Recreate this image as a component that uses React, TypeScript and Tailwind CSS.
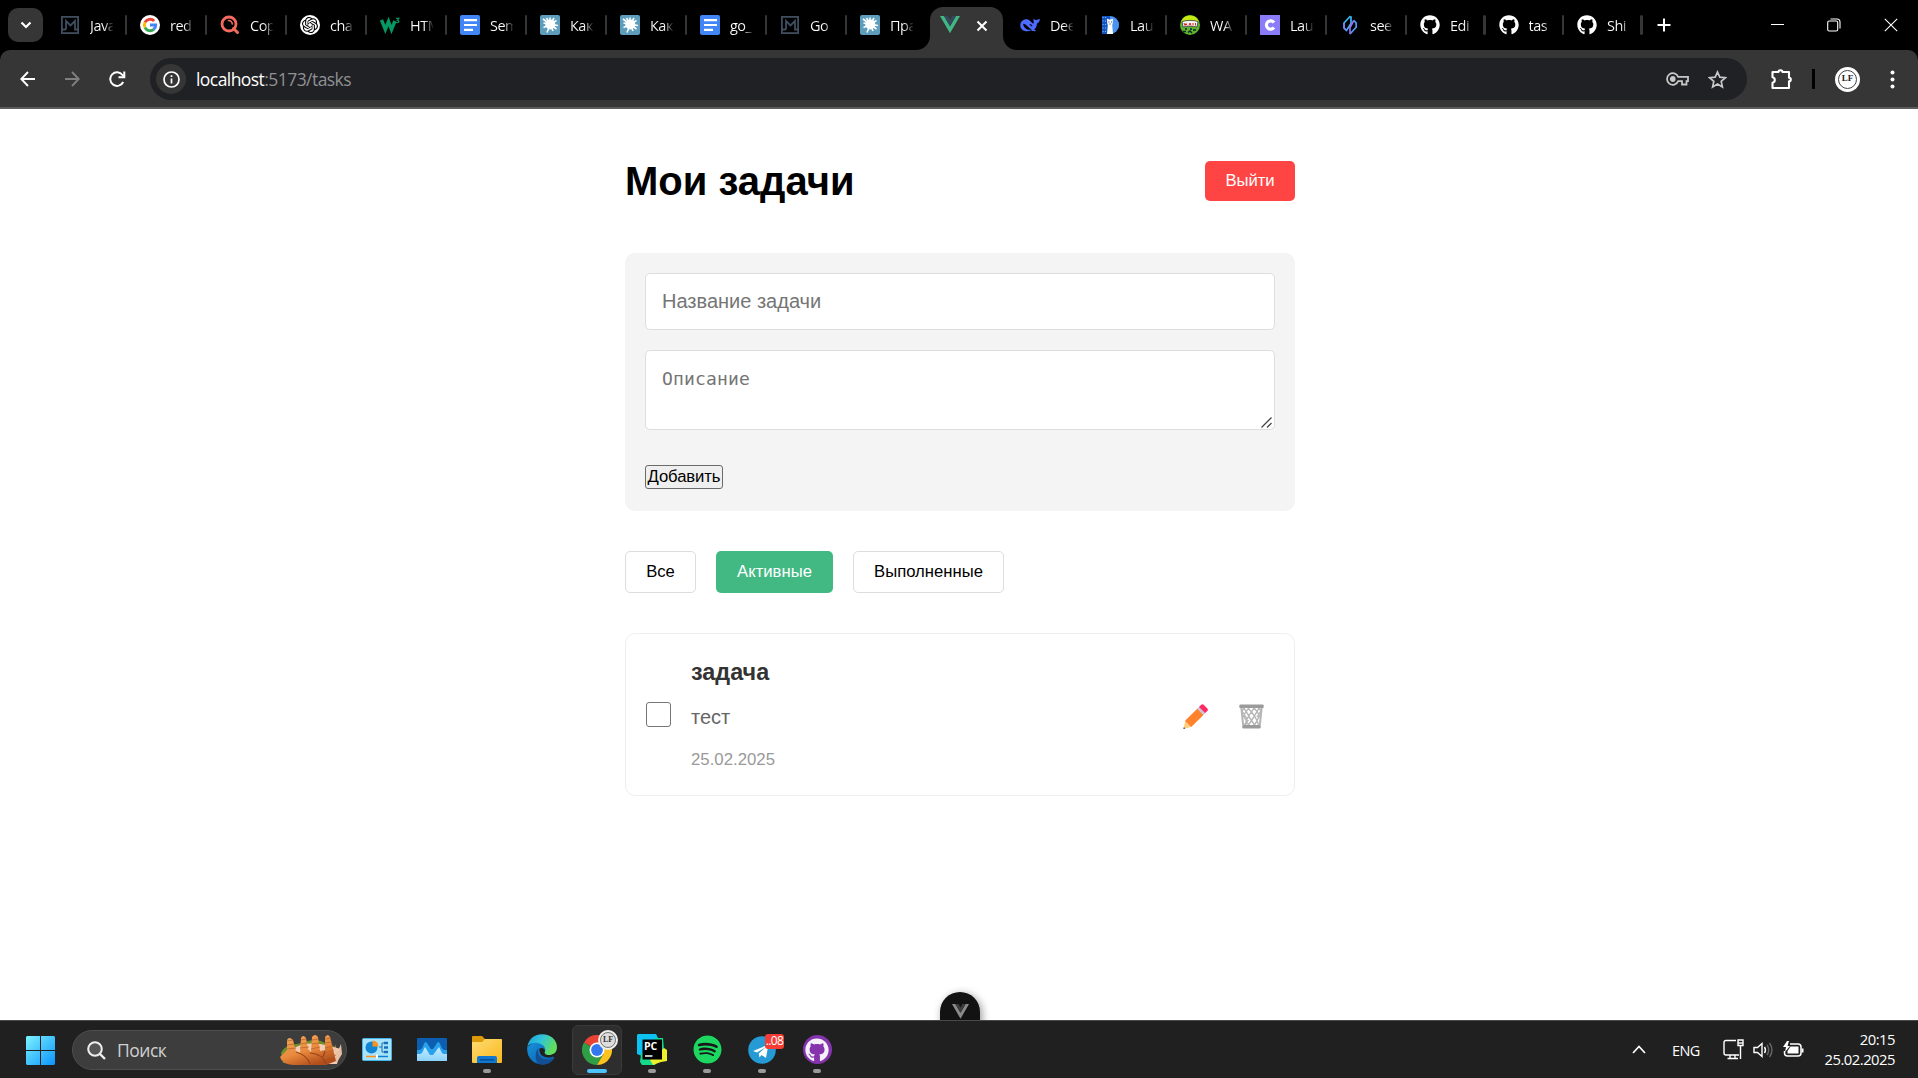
import React from "react";
import { FaGithub, FaSpotify } from "react-icons/fa";
import { SiOpenai } from "react-icons/si";

const M = () => (
  <svg width="18" height="18" viewBox="0 0 18 18" fill="none" stroke="#3f4d5f" strokeWidth="1.8">
    <rect x="0.9" y="0.9" width="16.2" height="16.2" />
    <path d="M5 13.500V5l4.500 4.500L14 5v8.500h3M5 13.500H1" />
  </svg>
);
const Google = () => (
  <svg width="20" height="20" viewBox="0 0 20 20" fill="none" strokeWidth="2.9">
    <circle cx="10" cy="10" r="10" fill="#fff" />
    <path d="M5 7.400A5.700 5.700 0 0 1 14.200 6" stroke="#ea4335" />
    <path d="M5 7.400a5.700 5.700 0 0 0 0 5.200" stroke="#fbbc05" />
    <path d="M5 12.600a5.700 5.700 0 0 0 8.700 1.800" stroke="#34a853" />
    <path d="M10 10h5.700a5.700 5.700 0 0 1-2 4.400" stroke="#4285f4" />
  </svg>
);
const RedSearch = () => (
  <svg width="20" height="20" viewBox="0 0 20 20" fill="none" stroke="#f36b5e" strokeLinecap="round">
    <circle cx="9" cy="9" r="7" strokeWidth="2.8" />
    <path d="M13.500 13.500l4 4" strokeWidth="3" />
    <path d="M8.500 5.500a4 4 0 0 1 3.800 3.500" strokeWidth="1.6" />
  </svg>
);
const Gpt = () => (
  <span className="flex size-5 items-center justify-center rounded-full bg-white text-black">
    <SiOpenai size={16} />
  </span>
);
const W3 = () => (
  <svg width="20" height="20" viewBox="0 0 20 20" fill="none" stroke="#059862">
    <path d="M1.500 5l3.800 9.500L8.500 6.500l3 8L15 6" strokeWidth="3.400" />
    <path d="M16 3.300h2.900l-1.500 2c2.400 0 1.800 3.200-1.300 2" strokeWidth="1.200" />
  </svg>
);
const Docs = () => (
  <svg width="20" height="20" viewBox="0 0 20 20">
    <rect width="20" height="20" rx="2" fill="#4285f4" />
    <path d="M4 5.200h13M4 10h13M4 14.800h9" stroke="#fff" strokeWidth="2.200" />
  </svg>
);
const Splat = () => (
  <svg width="20" height="20" viewBox="0 0 20 20">
    <rect width="20" height="20" rx="2" fill="#5f9dbd" />
    <circle cx="10.300" cy="9.500" r="5" fill="#fff" />
    <path
      d="M10.300 9.500L3 4M10.300 9.500L6.500 3M10.300 9.500L10 2.500M10.300 9.500L14 3M10.300 9.500L16.500 5.500M10.300 9.500L18 10.500M10.300 9.500L16.500 14M10.300 9.500L13 16M10.300 9.500L7 17.500M10.300 9.500L3.500 12.500M10.300 9.500L3.500 8"
      stroke="#fff"
      strokeWidth="1.600"
    />
  </svg>
);
const Vue = ({ w = 20, a = "#41b883", b = "#34495e" }: { w?: number; a?: string; b?: string }) => (
  <svg width={w} height={w * 0.87} viewBox="0 0 196 170">
    <path d="M0 0h39l59 101 59-101h39L98 170z" fill={a} />
    <path d="M39 0h36l23 40 23-40h36L98 101z" fill={b} />
  </svg>
);
const Whale = () => (
  <svg width="20" height="20" viewBox="0 0 20 20">
    <path
      d="M.3 10.500C.3 6.500 3.500 4 7 4.300c1.500.1 1.600.8 3.200 1.800 1.200.9 1.800 2.100 2.900 2.600.8-.4.700-1.500.4-2.600-.2-1 0-2 .3-2.600.7 1 1.300 1.500 2.500 1.500 1.300 0 2.200-1 3.600-.9-.2 2-1 3.800-2.900 4.300-.2 3-1.300 4.900-2.900 6 .8.600 1.600.8 2.200 1.400-2 .9-3.900.2-5.100-.5C6 17.800.3 15.300.3 10.500z"
      fill="#4d6bfe"
    />
    <path d="M3.200 8.800c3.200-.2 5.300 4.500 8.500 5.500-2.700 1.600-8.500-.5-8.500-5.500zM9.300 9c1.700-.3 3 1 3 2.600-.8-.2-2-1.400-3-2.600z" fill="#000" />
  </svg>
);
const Bear = () => (
  <svg width="20" height="20" viewBox="0 0 20 20">
    <path d="M2 1h8a9 9 0 0 1 0 18H2z" fill="#1256c4" />
    <path d="M10 1a9 9 0 0 1 0 18z" fill="#4a94f0" />
    <path d="M7 19l.8-9C6.500 6.500 7 4.500 10 4.500s3.500 2 2.200 5.500l.8 9z" fill="#fff" />
    <circle cx="7.800" cy="4.800" r="1" fill="#fff" />
    <circle cx="12.200" cy="4.800" r="1" fill="#fff" />
    <path d="M8.500 7h.8M11 7h.8M9.500 9h1" stroke="#123" />
    <path d="M3 2v16M5.500 2v16" stroke="#8ab8f5" strokeDasharray="1 2.500" />
  </svg>
);
const Wasp = () => (
  <svg width="20" height="20" viewBox="0 0 20 20">
    <circle cx="10" cy="10" r="10" fill="#5cb52a" />
    <path d="M1 7a9.500 9.500 0 0 1 18 0z" fill="#c6ea12" />
    <path d="M2 6.500c5-1.500 11-1.500 16 0l-1 5.500c-5-1-9-1-14 0z" fill="#f4f4f4" stroke="#223" strokeWidth=".7" />
    <path d="M4 8l1 2.500 1-2 1 2M9 10.500L10 8l1 2.500M13 8v2.500M15.500 8v2.500" stroke="#d22" fill="none" />
    <path d="M5 14h2M10 14h2M3 16.500h3M13 15h3M8 17.500l2-1.500 2 2" stroke="#123" strokeWidth="1.500" fill="none" />
  </svg>
);
const CIcon = () => (
  <svg width="20" height="20" viewBox="0 0 20 20">
    <path d="M0 0h20v20H0z" fill="#8a7cf8" />
    <path d="M14 7.500A4.200 4.200 0 1 0 14 12.500" fill="none" stroke="#fff" strokeWidth="3.200" />
  </svg>
);
const Diamond = () => (
  <svg width="20" height="20" viewBox="0 0 20 20" fill="none" strokeWidth="1.700">
    <path d="M10.500 1L4 8v5l2.500 2.500L11 8.500V1.200" stroke="#38b6f5" />
    <path d="M10 19l6.200-6.800V8L13.700 5.300" stroke="#4f9cf9" />
    <path d="M10 19v-6.500l3.700-7" stroke="#9a6bf2" />
    <path d="M4 8v5l2.500 2.500" stroke="#7d7cf5" />
  </svg>
);
const Git = () => <FaGithub size={20} color="#fff" />;

type TabT = { i: React.ComponentType; t: string; last?: boolean };
const left: TabT[] = [
  { i: M, t: "Java" }, { i: Google, t: "red" }, { i: RedSearch, t: "Cop" }, { i: Gpt, t: "cha" },
  { i: W3, t: "HTM" }, { i: Docs, t: "Sem" }, { i: Splat, t: "Как" }, { i: Splat, t: "Как" },
  { i: Docs, t: "go_" }, { i: M, t: "Go" }, { i: Splat, t: "Пра", last: true },
];
const right: TabT[] = [
  { i: Whale, t: "Dee" }, { i: Bear, t: "Lau" }, { i: Wasp, t: "WA" }, { i: CIcon, t: "Lau" }, { i: Diamond, t: "see" },
];
const gits: TabT[] = [{ i: Git, t: "Edi" }, { i: Git, t: "tas" }, { i: Git, t: "Shi" }];

const Tab = ({ tab, narrow }: { tab: TabT; narrow?: boolean }) => (
  <div className={`flex h-full shrink-0 items-center pl-3 ${narrow ? "w-[78.5px]" : "w-20"}`}>
    <span className="flex w-5 shrink-0 items-center justify-center"><tab.i /></span>
    <span className="ml-2.5 mt-0.5 w-[23px] overflow-hidden whitespace-nowrap bg-linear-to-r from-white from-60% to-white/10 bg-clip-text text-[14.5px] tracking-[-0.5px] text-transparent">
      {tab.t}
    </span>
    {!tab.last && <span className="ml-auto mr-px h-5 w-[2.5px] shrink-0 rounded-sm bg-[#363636]" />}
  </div>
);

const TabBar = () => (
  <div className="flex h-[50px] items-center bg-black text-white">
    <div className="ml-2 mr-[5px] flex h-[34px] w-[35px] shrink-0 items-center justify-center rounded-[10px] bg-[#363636]">
      <svg width="12" height="8" viewBox="0 0 12 8" fill="none" stroke="#fff" strokeWidth="2.200"><path d="M1.500 1.500L6 6l4.500-4.500" /></svg>
    </div>
    {left.map((t, k) => <Tab key={k} tab={t} />)}
    <div className="relative ml-[2px] mr-[5px] flex h-[43px] w-[73px] shrink-0 items-center self-end rounded-t-[13px] bg-[#363636] pb-[1px] pl-[10px]">
      <svg className="absolute -left-[14px] bottom-0" width="14" height="14"><path d="M14 0v14H0A14 14 0 0 0 14 0" fill="#363636" /></svg>
      <svg className="absolute -right-[14px] bottom-0" width="14" height="14"><path d="M0 0v14h14A14 14 0 0 1 0 0" fill="#363636" /></svg>
      <span className="-mt-1.5"><Vue /></span>
      <svg className="-mt-1 ml-4" width="12" height="12" viewBox="0 0 12 12" stroke="#fff" strokeWidth="2"><path d="M1.500 1.500l9 9M10.500 1.500l-9 9" /></svg>
    </div>
    {right.map((t, k) => <Tab key={k} tab={t} />)}
    {gits.map((t, k) => <Tab key={k} tab={t} narrow />)}
    <svg className="ml-[13px] shrink-0" width="14" height="14" viewBox="0 0 14 14" stroke="#fff" strokeWidth="2"><path d="M7 0.500v13M0.500 7h13" /></svg>
    <div className="ml-auto mr-5 flex items-center gap-[43px]">
      <svg width="13" height="14" viewBox="0 0 13 14" stroke="#fff"><path d="M0 6.500h13" /></svg>
      <svg width="14" height="14" viewBox="0 0 14 14" fill="none" stroke="#fff" strokeWidth="1.100"><rect x=".7" y="3" width="10" height="10" rx="1.500" /><path d="M3.500 1h6.500a3 3 0 0 1 3 3v6.500" /></svg>
      <svg width="14" height="14" viewBox="0 0 14 14" stroke="#fff" strokeWidth="1.100"><path d="M.8.800l12.400 12.400M13.200.800L.8 13.200" /></svg>
    </div>
  </div>
);

const Toolbar = () => (
  <div className="bg-black">
    <div className="flex h-[59px] items-center rounded-t-[10px] border-b-2 border-[#5c5c5c] bg-[#363636] pl-5 pt-px">
      <svg width="16" height="16" viewBox="0 0 16 16" fill="none" stroke="#fff" strokeWidth="1.900"><path d="M15 8H1.500M8 1L1.300 8 8 15" /></svg>
      <svg className="ml-[28px]" width="16" height="16" viewBox="0 0 16 16" fill="none" stroke="#7f7f7f" strokeWidth="1.900"><path d="M1 8h13.500M8 1l6.700 7L8 15" /></svg>
      <svg className="ml-[29px]" width="17" height="16" viewBox="0 0 17 16" fill="none" stroke="#fff" strokeWidth="2"><path d="M14.200 11A6.800 6.800 0 1 1 13.500 4L15 5.500" /><path d="M15.300.500v5.700H9.500" /></svg>
      <div className="ml-6 flex h-[42px] w-[1597px] items-center rounded-full bg-[#202124] pl-1.5">
        <span className="flex size-[30px] items-center justify-center rounded-full bg-[#363636]">
          <svg width="17" height="17" viewBox="0 0 17 17" fill="none" stroke="#fff" strokeWidth="1.700"><circle cx="8.500" cy="8.500" r="7.500" /><path d="M8.500 7.500v5M8.500 4.300v1.800" /></svg>
        </span>
        <span className="ml-2.5 text-[17.5px] tracking-[-0.56px] text-[#8f9093]"><span className="text-white">localhost</span>:5173/tasks</span>
        <svg className="ml-auto" width="23" height="14" viewBox="0 0 23 14" fill="none" stroke="#c7c7c7" strokeWidth="1.800"><path d="M12.200 4.800A5.800 5.800 0 1 0 12.200 9.200H16V12.500H20.500V9.200H22V4.800z" /><circle cx="6.700" cy="7" r="2" fill="#c7c7c7" /></svg>
        <svg className="ml-[19px] mr-5" width="19" height="19" viewBox="0 0 19 19" fill="none" stroke="#c7c7c7" strokeWidth="1.700"><path d="M9.500 2l2.300 5.200 5.600.5-4.200 3.700 1.200 5.500-4.900-2.900-4.900 2.900 1.200-5.500L1.600 7.700l5.600-.5z" /></svg>
      </div>
      <svg className="ml-6" width="22" height="22" viewBox="0 0 22 22" fill="none" stroke="#fff" strokeWidth="2.100"><path d="M1.500 4H7.500a2 1.800 0 0 1 4 0H18v5.800a1.800 1.800 0 0 1 0 3.600V20H1.500v-5.200a2.800 2.800 0 0 0 0-5.500z" strokeLinejoin="round" /></svg>
      <span className="ml-[19px] h-5 w-[3px] bg-black" />
      <span className="ml-5 flex size-[25px] items-center justify-center rounded-full bg-white">
        <span className="flex size-[19px] items-center justify-center rounded-full border border-[#444] font-['Liberation_Serif'] text-[9px] font-bold text-[#222]">LF</span>
      </span>
      <svg className="ml-[30px]" width="5" height="19" fill="#fff"><circle cx="2.500" cy="2.500" r="2" /><circle cx="2.500" cy="9.500" r="2" /><circle cx="2.500" cy="16.500" r="2" /></svg>
    </div>
  </div>
);

const Pencil = () => (
  <svg width="25" height="25" viewBox="0 0 25 25">
    <path d="M2.300 16.500l6.200 6.200L0.500 25z" fill="#ffce7c" />
    <path d="M.9 22.900l1.500 1.500L.3 25z" fill="#433b6b" />
    <path d="M2.300 16.500L14.500 4.500l6.200 6.200L8.500 22.700c-1-.1-1.500-.5-1.800-1.800-1.200-.2-1.700-.7-1.900-1.900-1.300-.2-2.200-1.100-2.500-2.500z" fill="#ff822d" />
    <path d="M14.200 4.800L16.500 2.500l6.200 6.200L20.400 11z" fill="#cdc4d6" />
    <path d="M16 3L18.200.8c.8-.8 1.800-.8 2.500 0l3.600 3.600c.8.800.8 1.700 0 2.500L22.100 9z" fill="#ff2a63" />
  </svg>
);
const Trash = () => (
  <svg width="25" height="25" viewBox="0 0 25 25" fill="none">
    <path d="M2.300 3.500l1.900 18M22.700 3.500l-1.900 18" stroke="#b4b4b4" strokeWidth="2" />
    <path
      d="M5 4l2 3.500-2.500 4.500L7.500 17l-2 4M5 4l-2 3 6 9.500L6.500 21M10 4L7 7.500 10 12l-3 4.500L9.500 21M9 4l3.500 4L9.500 12l3 4.500L9.500 21M15 4l-2.500 4 3 4-3 4.500L15.500 21M15 4l3 3.500-2.500 4.500 2.500 4.500L15.500 21M20 4l-2 3.500 2.500 4.500-2.500 4.500 1.500 4.500M20 4l2 3-4 6"
      stroke="#b6b6b6"
      strokeWidth="1.400"
    />
    <rect x="0.300" y="0.500" width="24.400" height="3.600" rx="1.200" fill="#9b9b9b" />
    <rect x="3.200" y="21" width="18.600" height="3.600" rx="1.500" fill="#9b9b9b" />
  </svg>
);

const btn = "flex h-[42px] items-center justify-center rounded-[5px] text-[16.667px] leading-none";

const Page = () => (
  <main className="flex h-[911px] flex-col items-center overflow-hidden bg-white pl-[2px] font-['Liberation_Sans',Arial,sans-serif] text-black">
    <div className="flex h-full w-[670px] flex-col">
      <div className="mt-[52px] flex h-10 items-center justify-between">
        <h1 className="text-[40px] font-bold leading-none">Мои задачи</h1>
        <button className="h-10 w-[90px] rounded-[5px] bg-[#ff4444] pb-[2px] text-[16.667px] tracking-[-0.1px] text-white">Выйти</button>
      </div>
      <form className="mt-[52px] flex h-[258px] flex-col items-start rounded-[10px] bg-[#f4f4f4] px-5 pt-5">
        <input className="h-[57px] w-full rounded-[5px] border border-[#ddd] bg-white px-4 text-[20px] placeholder:text-[#757575]" placeholder="Название задачи" />
        <div className="relative mt-5 h-20 w-full shrink-0">
          <textarea className="block h-20 w-full resize-none rounded-[5px] border border-[#ddd] bg-white px-4 pt-[14px] font-['DejaVu_Sans_Mono',monospace] text-[18px] tracking-[0.16px] placeholder:text-[#757575]" placeholder="Описание" />
          <svg className="absolute bottom-[2px] right-[3px]" width="11" height="11" stroke="#444" strokeWidth="1.300"><path d="M.5 10.500l10-10M6 10.500L10.500 6" /></svg>
        </div>
        <button type="button" className="mt-[35px] flex h-6 w-[78px] items-center justify-center whitespace-nowrap rounded-[3px] border border-[#6b6b6b] bg-[#efefef] text-[16.667px] leading-none tracking-[-0.1px]">Добавить</button>
      </form>
      <div className="mt-10 flex gap-5">
        <button className={`${btn} w-[71px] border border-[#ddd]`}>Все</button>
        <button className={`${btn} w-[117px] bg-[#42b983] text-white`}>Активные</button>
        <button className={`${btn} w-[151px] border border-[#ddd]`}>Выполненные</button>
      </div>
      <div className="mt-10 flex h-[163px] items-center rounded-[10px] border border-[#eee] pl-5 pr-[30px]">
        <span className="size-[25px] rounded-[3px] border-[1.5px] border-[#767676] bg-white" />
        <div className="ml-5 flex flex-col">
          <h3 className="text-[23.4px] font-bold leading-[26px] text-[#333]">задача</h3>
          <p className="mt-5 text-[20px] leading-6 text-[#666]">тест</p>
          <span className="mt-[21px] text-[16.8px] leading-5 text-[#999]">25.02.2025</span>
        </div>
        <div className="ml-auto mt-1 flex gap-[31px]"><Pencil /><Trash /></div>
      </div>
      <div className="mt-auto h-7 self-center">
        <div className="flex h-[50px] w-10 justify-center rounded-[20px] bg-[#121212] pt-3 shadow-[2px_2px_8px_rgba(0,0,0,0.4)]"><Vue w={17} a="#8a8a8a" b="#3d3d3d" /></div>
      </div>
    </div>
  </main>
);

const WinLogo = () => (
  <svg width="29" height="29" viewBox="0 0 29 29">
    <defs><linearGradient id="win" gradientUnits="userSpaceOnUse" x1="0" y1="0" x2="29" y2="29"><stop stopColor="#7df3ff" /><stop offset="1" stopColor="#0a93fb" /></linearGradient></defs>
    <path d="M1 0h13v14H0V1zM15 0h13l1 1v13H15zM0 15h14v14H1l-1-1zM15 15h14v13l-1 1H15z" fill="url(#win)" />
  </svg>
);
const Croissants = () => (
  <svg width="64" height="32" viewBox="0 0 64 32">
    <defs><linearGradient id="cr" x2=".6" y2="1"><stop stopColor="#f6ae5e" /><stop offset=".6" stopColor="#e8893c" /><stop offset="1" stopColor="#b04d1c" /></linearGradient></defs>
    <path d="M2 19C6 10 15 11 22 9s14-5 22-1 12 3 17 9l-3 12H4z" fill="#6d8f2c" />
    <path d="M12 16c10-7 20-7 30-6l20 5-4 15H15z" fill="#f0cdb4" />
    <path d="M56 10l2 9 4-9 1 10-6 10z" fill="#e9bfa4" />
    <path d="M1 23l7-7V6q2-4 6 0l3 11 4 2 1-15q2-4 5 0l2 11 3 3 1-15q3-4 6 0l2 14 5-1V3q3-4 5 0l6 24-10 4H14Q3 30 1 23z" fill="url(#cr)" />
    <path d="M8 7l6-1M8 11l7-1M8 15l9-1M22 6l5-1M21 10l7-1M21 14l9-1M33 6l6-1M33 10l7-1M32 15l9-2M46 5l6-1M46 9l7-1M46 14l8-2M46 19l9-3M46 24l11-3" stroke="#b9652a" strokeWidth=".8" />
    <path d="M17 18q11 3 14 12M31 19q13 1 16 11M46 17l-2 6" stroke="#9a4417" fill="none" strokeWidth="1.200" />
  </svg>
);
const ControlPanel = () => (
  <svg width="30" height="24" viewBox="0 0 30 24">
    <rect x=".5" y=".5" width="29" height="22" rx="1" fill="#a9e3fb" stroke="#43b4ec" />
    <circle cx="9.500" cy="9.500" r="6" fill="#1085d4" /><path d="M10.500 8.500V2.500a6 6 0 0 1 6 6z" fill="#f6921e" />
    <path d="M17 9h3M20 5v9M20 5h2M20 14h2" stroke="#1e6fa8" /><path d="M22 5h4M22 9.500h4M22 14h4" stroke="#1470b8" strokeWidth="2.500" />
    <path d="M4 18.500h11" stroke="#f6921e" strokeWidth="1.500" /><path d="M15 18.500h11" stroke="#0b7fd0" strokeWidth="1.500" /><path d="M15 16.500v4" stroke="#fff" strokeWidth="2" />
  </svg>
);
const Monitor = () => (
  <svg width="30" height="24" viewBox="0 0 30 24">
    <defs><linearGradient id="mo" x2="0" y2="1"><stop stopColor="#c4ecff" /><stop offset="1" stopColor="#8ad3fb" /></linearGradient></defs>
    <rect width="30" height="23" rx="1" fill="#0c5fb0" />
    <path d="M0 12h2q3 0 4.500-5Q8 2 10 5l3.500 5.500q1.500 1.500 3 0L20 5q2-3 3.500 2 1.500 5 4.500 5h2v11H0z" fill="#29a0ea" />
    <path d="M0 16h3q2 0 3.500-4L8 9l5 8h3l6-8 3 6q1 1 2 1h3v7H0z" fill="url(#mo)" />
  </svg>
);
const Folder = () => (
  <svg width="30" height="28" viewBox="0 0 30 28">
    <defs><linearGradient id="fo" x2="1" y2="1"><stop stopColor="#ffdc73" /><stop offset="1" stopColor="#f9b81c" /></linearGradient></defs>
    <path d="M0 1q0-1 1-1h9l3 3h15q2 0 2 2v8H0z" fill="#dd9a08" />
    <path d="M0 6h10l3-3h16q1 0 1 1v22q0 1-1 1H1q-1 0-1-1z" fill="url(#fo)" />
    <path d="M5 27v-5q0-2 2-2h16q2 0 2 2v5z" fill="#0f78d0" /><path d="M8 23.800h14" stroke="#0a4d93" strokeWidth="1.500" />
  </svg>
);
const Edge = () => (
  <svg width="30" height="31" viewBox="0 0 30 31">
    <defs>
      <linearGradient id="e1" x2="1" y2=".4"><stop stopColor="#1c9fe0" /><stop offset=".5" stopColor="#31c5d8" /><stop offset="1" stopColor="#62de5a" /></linearGradient>
      <linearGradient id="e2" x2="1" y2="1"><stop stopColor="#1794e0" /><stop offset="1" stopColor="#0c59a4" /></linearGradient>
    </defs>
    <path d="M.3 13C-.8 23 6 30.500 15 30.500c5 0 9-2 12-6.500L18 11 8 7z" fill="url(#e2)" />
    <path d="M.3 13C2 4 8 .3 15 .3c9 0 15 6 15 12.700 0 6-4 8-8.500 8-4 0-5-1.500-3.500-3.500 1-2 0-7-7-8.500C6 8 2 10 .3 13z" fill="url(#e1)" />
    <path d="M11.500 14c-2 7 3 12 10 11.500 3-.2 5-1.500 6.500-2.500-3 6-9 8.500-15 7.300C7 28 8 17 11.500 14z" fill="#124f93" />
    <path d="M12.500 14.500c2-1.500 5.500 0 5.500 2.500-1.500 2.500 1 4 3.500 4 3 0 5-.5 7-1.500-.5 2-3 4-7 4-6 0-10-4-9-9z" fill="#202020" />
  </svg>
);
const Chrome = () => (
  <svg width="30" height="30" viewBox="0 0 30 30">
    <path d="M15 15L2 7.500A15 15 0 0 1 28 7.500z" fill="#ea4335" />
    <path d="M15 15h-1L2 7.500A15 15 0 0 0 15 30l6.500-11z" fill="#2f9e44" />
    <path d="M15 7.500h13A15 15 0 0 1 15 30l6.500-11z" fill="#fcc31e" />
    <circle cx="15" cy="15" r="7.500" fill="#fff" /><circle cx="15" cy="15" r="5.900" fill="#3478f0" />
  </svg>
);
const PyCharm = () => (
  <svg width="30" height="31" viewBox="0 0 30 31">
    <path d="M1 0h18l2 4v18H5L0 20V1z" fill="#0cc2f2" /><path d="M19 4l7 0 1 12-9 15H5l-2-3 1-8z" fill="#16d98a" /><path d="M27 14l3 2v11l-6 1-8 3-3-5z" fill="#eef02a" />
    <rect x="5.500" y="5.500" width="19.500" height="20" fill="#000" />
    <text x="7" y="16" fontSize="10.500" fontWeight="700" fill="#fff" fontFamily="Open Sans">PC</text><path d="M8 22h7.500" stroke="#fff" strokeWidth="1.500" />
  </svg>
);
const Telegram = () => (
  <svg width="28" height="30" viewBox="0 0 28 30">
    <circle cx="14" cy="15" r="13.800" fill="#259ad4" />
    <path d="M5 16L20.500 9.500 18 23l-4.500-3-2 2.500-.8-4 7-6.200-8.700 5.200z" fill="#fff" />
  </svg>
);
const Spotify = () => (
  <span className="flex items-center justify-center rounded-full bg-[#181818]"><FaSpotify size={29} color="#1ed760" /></span>
);
const GitDesk = () => (
  <span className="flex size-[29px] items-center justify-center rounded-full bg-[#8534ac]"><FaGithub size={24} color="#f6f0fa" /></span>
);
const Badge = () => (
  <span className="absolute right-[3px] top-1 flex size-5 items-center justify-center rounded-full border-2 border-[#eee] bg-[#ddd] outline-1 -outline-offset-3 outline-[#777] font-['Liberation_Serif'] text-[8px] font-bold text-[#333]">LF</span>
);

const apps = [
  { I: ControlPanel }, { I: Monitor }, { I: Folder, run: true }, { I: Edge }, { I: Chrome, active: true },
  { I: PyCharm, run: true }, { I: Spotify, run: true }, { I: Telegram, run: true, count: "..08" }, { I: GitDesk, run: true },
];

const Taskbar = () => (
  <footer className="relative flex h-[58px] items-center border-t border-[#494949] bg-[#202020] text-white">
    <span className="ml-[26px] mt-px"><WinLogo /></span>
    <div className="ml-[17px] mt-px flex h-10 w-[275px] items-center rounded-full border border-[#4e4e4e] bg-[#3d3d3d] pl-3.5 pr-[3px]">
      <svg width="19" height="19" viewBox="0 0 19 19" fill="none" stroke="#eee" strokeWidth="2"><circle cx="8" cy="8" r="6.800" fill="#555" /><path d="M13 13l5 5" strokeWidth="2.400" /></svg>
      <span className="ml-[11px] mt-px text-[17.5px] tracking-[-0.5px] text-[#d0d0d0]">Поиск</span>
      <span className="ml-auto"><Croissants /></span>
    </div>
    <div className="ml-[5px] flex h-full items-center gap-[5px]">
      {apps.map(({ I, run, active, count }, k) => (
        <div key={k} className={`relative flex h-[50px] w-[50px] items-center justify-center rounded-md ${active ? "border border-[#3a3a3a] bg-[#2e2e2e]" : ""}`}>
          <I />
          {active && <Badge />}
          {count && <span className="absolute right-[3px] top-[9px] flex h-[15px] w-[19px] items-center justify-center rounded-[3px] bg-[#f23c34] text-[12px] tracking-[-0.6px]">{count}</span>}
          {run && <span className="absolute bottom-0.5 h-1 w-2 rounded-full bg-[#9a9a9a]" />}
          {active && <span className="absolute bottom-px h-1 w-5 rounded-full bg-[#4cc2ff]" />}
        </div>
      ))}
    </div>
    <svg className="ml-auto" width="14" height="9" viewBox="0 0 14 9" fill="none" stroke="#fff" strokeWidth="1.700"><path d="M1 8l6-6.500L13 8" /></svg>
    <span className="ml-[26px] mt-0.5 w-[30px] whitespace-nowrap text-[14.5px] tracking-[-0.6px]">ENG</span>
    <svg className="ml-[21px]" width="21" height="21" viewBox="0 0 21 21" fill="none" stroke="#fff" strokeWidth="1.400"><path d="M13 1.500H3a2 2 0 0 0-2 2V14a2 2 0 0 0 2 2h13M7 16v3.500M12 16v3.500M4.500 19.500h10.500" /><path d="M15 1h5v5.500h-5zM17.500 6.500V20" /><path d="M15 4h5" /></svg>
    <svg className="ml-[9px]" width="21" height="18" viewBox="0 0 21 18" fill="none" stroke="#fff" strokeWidth="1.400"><path d="M1 6.500v5h3.500L9 15.500v-13L4.500 6.500zM11.500 6q2 3 0 6" /><path d="M14 4q3.500 5 0 10M16.500 2q5 7 0 14" stroke="#666" /></svg>
    <svg className="ml-[9px]" width="21" height="18" viewBox="0 0 21 18" fill="none" stroke="#fff" strokeWidth="1.500"><path d="M7 3h8a3 3 0 0 1 3 3v6a3 3 0 0 1-3 3H4.500a3 3 0 0 1-3-3v-2" /><path d="M7.500 5.500H15.500V12.500H4.500V10zM18.500 7.500h2v4h-2zM4 0L0 6h3l-1 5 5-6H4.500L6 0z" fill="#fff" stroke="none" /></svg>
    <div className="-mt-px ml-[20px] mr-[23px] w-[71px] whitespace-nowrap text-right text-[14.8px] leading-5 tracking-[-0.5px]"><div>20:15</div><div>25.02.2025</div></div>
  </footer>
);

export default function App() {
  return (
    <div className="flex h-[1078px] w-[1918px] flex-col overflow-hidden font-['Open_Sans','Noto_Sans',sans-serif]">
      <TabBar />
      <Toolbar />
      <Page />
      <Taskbar />
    </div>
  );
}
